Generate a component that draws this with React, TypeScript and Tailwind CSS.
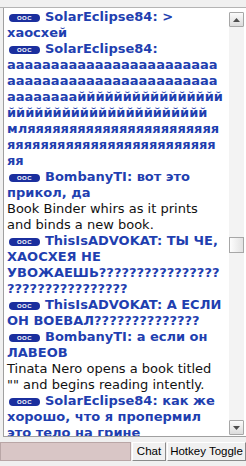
import React from 'react';

type Msg = { ooc?: boolean; name?: string; text: string };

const word1 = 'а'.repeat(56) + 'й'.repeat(38);
const word2 = 'мл' + 'я'.repeat(50);

const messages: Msg[] = [
  { ooc: true, name: 'SolarEclipse84', text: '> хаосхей' },
  { ooc: true, name: 'SolarEclipse84', text: `${word1} ${word2}` },
  { ooc: true, name: 'BombanyTI', text: 'вот это прикол, да' },
  { text: 'Book Binder whirs as it prints and binds a new book.' },
  { ooc: true, name: 'ThisIsADVOKAT', text: 'ТЫ ЧЕ, ХАОСХЕЯ НЕ УВОЖАЕШЬ' + '?'.repeat(32) },
  { ooc: true, name: 'ThisIsADVOKAT', text: 'А ЕСЛИ ОН ВОЕВАЛ' + '?'.repeat(14) },
  { ooc: true, name: 'BombanyTI', text: 'а если он ЛАВЕОВ' },
  { text: 'Tinata Nero opens a book titled "" and begins reading intently.' },
  { ooc: true, name: 'SolarEclipse84', text: 'как же хорошо, что я пропермил это тело на грине' },
];

const OocBadge = () => (
  <span className="inline-block w-[31px] h-[8px] ml-[2px] mr-[5px] rounded-full bg-[#1b2f9e] text-white text-[6px] leading-[8px] text-center align-[1px] font-bold tracking-[0.5px] font-['Liberation_Sans',sans-serif]">
    OOC
  </span>
);

const ScrollButton = ({ down }: { down?: boolean }) => (
  <div className="w-[15px] h-[15px] flex items-center justify-center border border-[#a7a7a7] bg-gradient-to-b from-[#fbfbfb] to-[#dcdcdc] rounded-[1px]">
    <svg width="7" height="4" viewBox="0 0 7 4">
      {down ? <polygon points="0,0 7,0 3.5,4" fill="#4d4d4d" /> : <polygon points="0,4 7,4 3.5,0" fill="#4d4d4d" />}
    </svg>
  </div>
);

export default function App() {
  return (
    <div className="w-[246px] h-[466px] bg-[#f0f0f0] flex flex-col overflow-hidden">
      <div className="h-[8px] shrink-0 border-b border-[#b4b4b4]" />
      <div className="h-[429px] shrink-0 flex pl-[3px]">
        <div className="flex-1 flex bg-white border-l border-b border-[#a0a0a0] overflow-hidden">
          <div className="flex-1 overflow-hidden pl-[3px] pr-[5px] pt-[1px] text-[13px] leading-[16px] font-['DejaVu_Sans',Verdana,sans-serif] [overflow-wrap:break-word]">
            {messages.map((m, i) =>
              m.ooc ? (
                <p key={i} className="font-bold text-[#1f3fb0]">
                  <OocBadge />
                  {m.name}: {m.text}
                </p>
              ) : (
                <p key={i} className="text-[#111]">
                  {m.text}
                </p>
              )
            )}
          </div>
          <div className="w-[15px] mr-[2px] mt-[4px] mb-[1px] flex flex-col bg-[#f3f3f3]">
            <ScrollButton />
            <div className="flex-1 flex flex-col">
              <div className="h-[210px]" />
              <div className="h-[16px] border border-[#a7a7a7] bg-gradient-to-r from-[#fdfdfd] to-[#e2e2e2]" />
            </div>
            <ScrollButton down />
          </div>
        </div>
      </div>
      <div className="flex-1 flex items-start pt-[5px] font-['Liberation_Sans',Arial,sans-serif] text-[11.5px]">
        <div className="w-[131px] h-[19px] bg-[#d9c6c6] border border-[#b9a6a6]" />
        <button className="h-[19px] w-[34px] ml-[1px] bg-[#f0f0f0] border border-t-white border-l-white border-r-[#8a8a8a] border-b-[#8a8a8a] text-black">
          Chat
        </button>
        <button className="h-[19px] flex-1 ml-[1px] bg-[#f0f0f0] border border-t-white border-l-white border-r-[#8a8a8a] border-b-[#8a8a8a] text-black whitespace-nowrap">
          Hotkey Toggle
        </button>
      </div>
    </div>
  );
}
